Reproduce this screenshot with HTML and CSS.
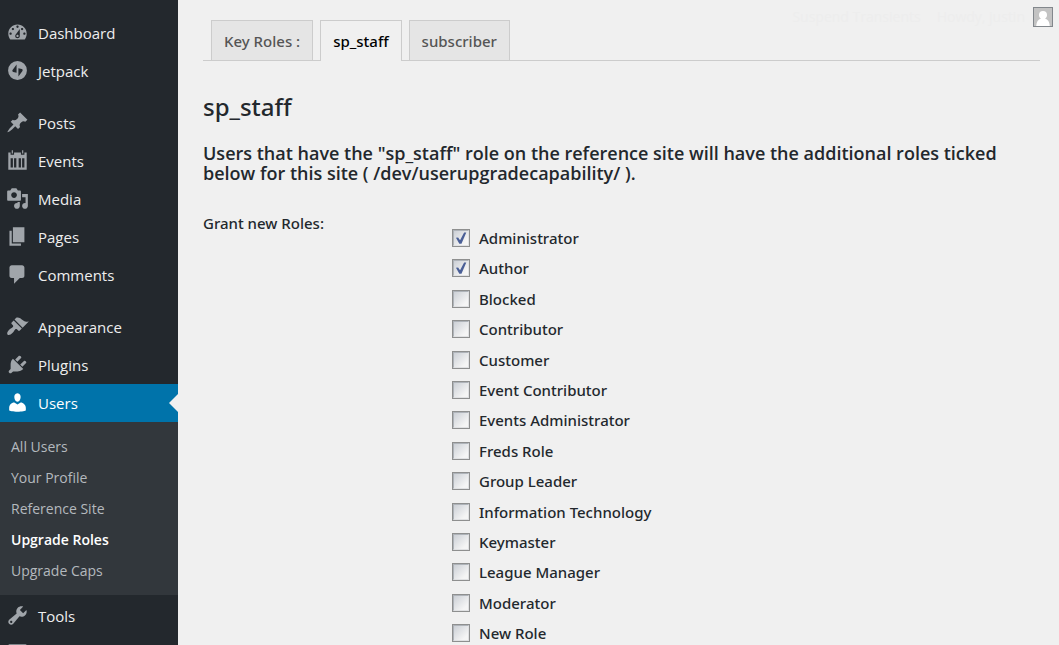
FILE: index.html
```
<!DOCTYPE html>
<html lang="en">
<head>
<meta charset="utf-8">
<title>Upgrade Roles</title>
<link rel="stylesheet" href="styles.css">
</head>
<body>
<div class="layout">
  <nav class="sidebar" aria-label="Main menu">
    <ul class="menu">
      <li><a class="menu-link" href="#"><svg class="icon" viewBox="0 0 20 20"><path d="M3.76 16h12.48c1.1-1.37 1.76-3.11 1.76-5 0-4.42-3.58-8-8-8s-8 3.58-8 8c0 1.89.66 3.63 1.76 5zM10 4c.55 0 1 .45 1 1s-.45 1-1 1-1-.45-1-1 .45-1 1-1zM6 6c.55 0 1 .45 1 1s-.45 1-1 1-1-.45-1-1 .45-1 1-1zm8 0c.55 0 1 .45 1 1s-.45 1-1 1-1-.45-1-1 .45-1 1-1zm-5.37 5.55L12 7v6c0 1.1-.9 2-2 2s-2-.9-2-2c0-.57.24-1.08.63-1.45zM4 10c.55 0 1 .45 1 1s-.45 1-1 1-1-.45-1-1 .45-1 1-1zm12 0c.55 0 1 .45 1 1s-.45 1-1 1-1-.45-1-1 .45-1 1-1zm-5 3c0-.55-.45-1-1-1s-1 .45-1 1 .45 1 1 1 1-.45 1-1z"/></svg>Dashboard</a></li>
      <li><a class="menu-link" href="#"><svg class="icon" viewBox="0 0 20 20"><path fill-rule="evenodd" d="M10 1.8a8.2 8.2 0 1 0 0 16.4a8.2 8.2 0 0 0 0-16.4zM9.2 4.8v7.1l-2.9-.7c-.8-.2-1-.9-.6-1.600zM10.800 15.200V8.100l2.900.7c.8.2 1 .9.6 1.600z"/></svg>Jetpack</a></li>
    </ul>
    <ul class="menu">
      <li><a class="menu-link" href="#"><svg class="icon" viewBox="0 0 20 20"><path d="M10.44 3.02l1.82-1.82 6.36 6.35-1.83 1.82c-1.05-.68-2.48-.57-3.41.36l-.75.75c-.92.93-1.04 2.35-.35 3.41l-1.83 1.82-2.41-2.41-2.8 2.79c-.42.42-3.38 2.71-3.8 2.29s1.86-3.39 2.28-3.81l2.79-2.79L4.1 9.36l1.83-1.82c1.05.69 2.48.57 3.4-.36l.75-.75c.93-.92 1.05-2.35.36-3.41z"/></svg>Posts</a></li>
      <li><a class="menu-link" href="#"><svg class="icon" viewBox="0 0 20 20"><path fill-rule="evenodd" d="M2 3h2v2h3V3h6v2h3V3h2v15H2zM5 1h1v3H5zM14 1h1v3h-1zM4 8v8h2V8zM7 8v8h2V8zM11 8v8h2V8zM14 8v8h2V8z"/></svg>Events</a></li>
      <li><a class="menu-link" href="#"><svg class="icon" viewBox="0 0 20 20"><path d="M13 11V4c0-.55-.45-1-1-1h-1.67L9 1H5L3.67 3H2c-.55 0-1 .45-1 1v7c0 .55.45 1 1 1h10c.55 0 1-.45 1-1zM7 4.5c1.38 0 2.5 1.12 2.5 2.5S8.38 9.5 7 9.5 4.5 8.38 4.5 7 5.62 4.5 7 4.5zM14 6h5v10.5c0 1.38-1.12 2.5-2.5 2.5S14 17.88 14 16.5s1.12-2.5 2.5-2.5c.17 0 .34.02.5.05V9h-3V6zm-4 8.05V13h2v3.5c0 1.38-1.12 2.5-2.5 2.5S7 17.88 7 16.5 8.120 14 9.500 14c.17 0 .34.02.5.05z"/></svg>Media</a></li>
      <li><a class="menu-link" href="#"><svg class="icon" viewBox="0 0 20 20"><path d="M6 15V2h10v13H6zm-1 1h8v2H3V5h2v11z"/></svg>Pages</a></li>
      <li><a class="menu-link" href="#"><svg class="icon" viewBox="0 0 20 20"><path d="M5 2h9c1.1 0 2 .9 2 2v7c0 1.1-.9 2-2 2h-2l-5 5v-5H5c-1.1 0-2-.9-2-2V4c0-1.1.9-2 2-2z"/></svg>Comments</a></li>
    </ul>
    <ul class="menu">
      <li><a class="menu-link" href="#"><svg class="icon" viewBox="0 0 20 20"><path d="M14.48 11.06L7.41 3.99l1.5-1.5c.5-.56 2.3-.47 3.51.32 1.21.8 1.43 1.28 2.91 2.1 1.18.64 2.45 1.26 4.45.85zm-.71.71L6.7 4.7 4.93 6.47c-.39.39-.39 1.02 0 1.41l1.06 1.06c.39.39.39 1.03 0 1.42-.6.6-1.43 1.11-2.21 1.69-.35.26-.7.53-1.01.84C1.43 14.23.4 16.08 1.4 17.07c.99 1 2.84-.03 4.18-1.36.31-.31.58-.66.85-1.02.57-.78 1.08-1.61 1.69-2.21.39-.39 1.02-.39 1.41 0l1.06 1.06c.39.39 1.02.39 1.41 0z"/></svg>Appearance</a></li>
      <li><a class="menu-link" href="#"><svg class="icon" viewBox="0 0 20 20"><path d="M13.11 4.36L9.87 7.6 8 5.73l3.24-3.24c.35-.34 1.05-.2 1.56.32.52.51.66 1.21.31 1.55zm-8 1.77l.91-1.12 9.01 9.01-1.19.84c-.71.71-2.63 1.16-3.82 1.16H6.14L4.9 17.26c-.59.59-1.54.59-2.12 0-.59-.58-.59-1.53 0-2.12l1.24-1.24v-3.88c0-1.13.4-3.19 1.09-3.89zm7.26 3.97l3.24-3.24c.34-.35 1.04-.21 1.55.31.52.51.66 1.21.31 1.55l-3.24 3.25z"/></svg>Plugins</a></li>
      <li>
        <a class="menu-link menu-link-current" href="#"><svg class="icon" viewBox="0 0 20 20"><path d="M10 9.25c-2.27 0-2.73-3.44-2.73-3.44C7 4.02 7.82 2 9.97 2c2.16 0 2.98 2.02 2.71 3.81 0 0-.41 3.44-2.68 3.44zm0 2.57L12.72 10c2.39 0 4.52 2.33 4.52 4.53v2.49s-3.65 1.13-7.24 1.13c-3.65 0-7.24-1.13-7.24-1.13v-2.49c0-2.25 1.94-4.48 4.47-4.48z"/></svg>Users</a>
        <ul class="submenu">
          <li><a class="submenu-link" href="#">All Users</a></li>
          <li><a class="submenu-link" href="#">Your Profile</a></li>
          <li><a class="submenu-link" href="#">Reference Site</a></li>
          <li><a class="submenu-link submenu-link-current" href="#" aria-current="page">Upgrade Roles</a></li>
          <li><a class="submenu-link" href="#">Upgrade Caps</a></li>
        </ul>
      </li>
      <li><a class="menu-link" href="#"><svg class="icon" viewBox="0 0 20 20"><path d="M16.68 9.77c-1.34 1.34-3.3 1.67-4.95.99l-5.41 6.52c-.99.99-2.59.99-3.58 0s-.99-2.59 0-3.57l6.52-5.42c-.68-1.65-.35-3.61.99-4.95 1.28-1.28 3.12-1.62 4.72-1.06l-2.89 2.89 2.82 2.82 2.86-2.87c.53 1.58.18 3.39-1.08 4.65zM3.810 16.210c.4.39 1.04.39 1.43 0 .4-.4.4-1.04 0-1.43-.39-.4-1.03-.4-1.43 0-.39.39-.39 1.03 0 1.43z"/></svg>Tools</a></li>
      <li><a class="menu-link" href="#" aria-label="Settings"><svg class="icon" viewBox="0 0 20 20"><path fill-rule="evenodd" d="M3 2h14a1 1 0 0 1 1 1v14a1 1 0 0 1-1 1H3a1 1 0 0 1-1-1V3a1 1 0 0 1 1-1zM6 4v12h1V4zM13 4v12h1V4z"/></svg></a></li>
    </ul>
  </nav>

  <main class="content">
    <div class="account">
      <a class="account-link" href="#">Suspend Transients</a>
      <a class="account-link" href="#">Howdy, justin</a>
      <svg class="avatar" viewBox="0 0 20 20"><rect x=".5" y=".5" width="19" height="19" fill="#c3c3c3" stroke="#82878c"/><path fill="#fff" d="M10 4a4 4 0 0 1 4 4c0 1.600-.8 2.900-2 3.600 3 .9 4.500 3.400 4.800 7.400H3.200c.3-4 1.800-6.500 4.800-7.400C6.800 10.900 6 9.600 6 8a4 4 0 0 1 4-4z"/></svg>
    </div>

    <nav class="tabs" aria-label="Key roles">
      <a class="tab" href="#">Key Roles :</a>
      <a class="tab tab-active" href="#">sp_staff</a>
      <a class="tab" href="#">subscriber</a>
    </nav>

    <h1 class="title">sp_staff</h1>
    <h2 class="description">Users that have the "sp_staff" role on the reference site will have the additional roles ticked below for this site ( /dev/userupgradecapability/ ).</h2>

    <form class="grant">
      <div class="grant-label" id="grant-label">Grant new Roles:</div>
      <div class="roles" role="group" aria-labelledby="grant-label">
        <label class="role"><input class="check" type="checkbox" checked>Administrator</label>
        <label class="role"><input class="check" type="checkbox" checked>Author</label>
        <label class="role"><input class="check" type="checkbox">Blocked</label>
        <label class="role"><input class="check" type="checkbox">Contributor</label>
        <label class="role"><input class="check" type="checkbox">Customer</label>
        <label class="role"><input class="check" type="checkbox">Event Contributor</label>
        <label class="role"><input class="check" type="checkbox">Events Administrator</label>
        <label class="role"><input class="check" type="checkbox">Freds Role</label>
        <label class="role"><input class="check" type="checkbox">Group Leader</label>
        <label class="role"><input class="check" type="checkbox">Information Technology</label>
        <label class="role"><input class="check" type="checkbox">Keymaster</label>
        <label class="role"><input class="check" type="checkbox">League Manager</label>
        <label class="role"><input class="check" type="checkbox">Moderator</label>
        <label class="role"><input class="check" type="checkbox">New Role</label>
      </div>
    </form>
  </main>
</div>
</body>
</html>
```
FILE: styles.css
```
* {
  box-sizing: border-box;
}

body {
  margin: 0;
  height: 100vh;
  overflow: hidden;
  background: #f0f0f0;
  color: #23282d;
  font: 15px/20px "Open Sans", "Noto Sans", sans-serif;
}

ul {
  margin: 0;
  padding: 0;
  list-style: none;
}

a {
  text-decoration: none;
}

.layout {
  display: grid;
  grid-template-columns: 178px 1fr;
  height: 100%;
}

/* Sidebar */
.sidebar {
  display: flex;
  flex-direction: column;
  gap: 14px;
  padding-top: 14px;
  overflow: hidden;
  background: #23282d;
}

.menu-link {
  display: flex;
  align-items: center;
  gap: 9px;
  height: 38px;
  padding-left: 6px;
  color: #eee;
}

.icon {
  flex: none;
  width: 23px;
  height: 23px;
  margin-bottom: 2px;
  fill: #a0a5aa;
}

.menu-link-current {
  position: relative;
  background: #0073aa;
  color: #fff;
}

.menu-link-current .icon {
  fill: #fff;
}

.menu-link-current::after {
  content: "";
  position: absolute;
  top: 10px;
  right: 0;
  border: 9px solid transparent;
  border-left-width: 0;
  border-right-color: #f0f0f0;
}

.submenu {
  margin-bottom: 2px;
  padding: 9px 0;
  background: #32373c;
}

.submenu-link {
  display: block;
  padding-left: 11px;
  color: #b4b9be;
  font-size: 14px;
  line-height: 31px;
}

.submenu-link-current {
  color: #fff;
  font-weight: 600;
}

/* Content */
.content {
  position: relative;
  min-width: 0;
  padding: 20px 19px 0 25px;
}

.account {
  position: absolute;
  top: 7px;
  right: 6px;
  display: flex;
  align-items: center;
  gap: 8px;
}

.account-link {
  color: #ededed;
  font-size: 14px;
}

.account-link:first-child {
  margin-right: 8px;
}

.avatar {
  width: 20px;
  height: 20px;
}

.tabs {
  display: flex;
  gap: 7px;
  padding-left: 8px;
  border-bottom: 1px solid #ccc;
}

.tab {
  height: 40px;
  padding: 0 12px;
  border: 1px solid #ccc;
  border-bottom: 0;
  background: #e5e5e5;
  color: #555;
  font-family: "Noto Sans", "Open Sans", sans-serif;
  font-weight: 500;
  line-height: 40px;
}

.tab-active {
  height: 41px;
  margin-bottom: -1px;
  background: #f0f0f0;
  color: #000;
}

.title {
  margin: 30px 0 0;
  font-family: "Noto Sans", "Open Sans", sans-serif;
  font-size: 24px;
  font-weight: 500;
  line-height: 32px;
}

.description {
  margin: 20px 0 0;
  font-size: 18px;
  font-weight: 600;
  line-height: 20px;
}

.grant {
  display: grid;
  grid-template-columns: 249px 1fr;
  margin-top: 30px;
  font-family: "Noto Sans", "Open Sans", sans-serif;
  font-size: 15px;
  font-weight: 500;
}

.roles {
  display: grid;
  grid-auto-rows: 30px 30px 31px 30px 31px;
  justify-items: start;
  padding-top: 10px;
}

.role {
  display: flex;
  align-items: center;
  gap: 9px;
}

.check {
  appearance: none;
  display: grid;
  flex: none;
  width: 18px;
  height: 18px;
  margin: 0;
  border: 1px solid #8e8f8f;
  background: #f4f4f4;
  place-items: center;
}

.check::before {
  content: "";
  grid-area: 1 / 1;
  width: 14px;
  height: 14px;
  border: 1px solid;
  border-color: #aeb3b9 #e0e1e3 #e0e1e3 #aeb3b9;
  background: linear-gradient(135deg, #ccd0d6, #f5f5f5 80%);
}

.check:checked::after {
  content: "";
  grid-area: 1 / 1;
  width: 12px;
  height: 12px;
  background: #4a5f97;
  clip-path: polygon(8% 48%, 26% 46%, 42% 68%, 76% 4%, 94% 4%, 54% 98%, 36% 98%);
}
```
